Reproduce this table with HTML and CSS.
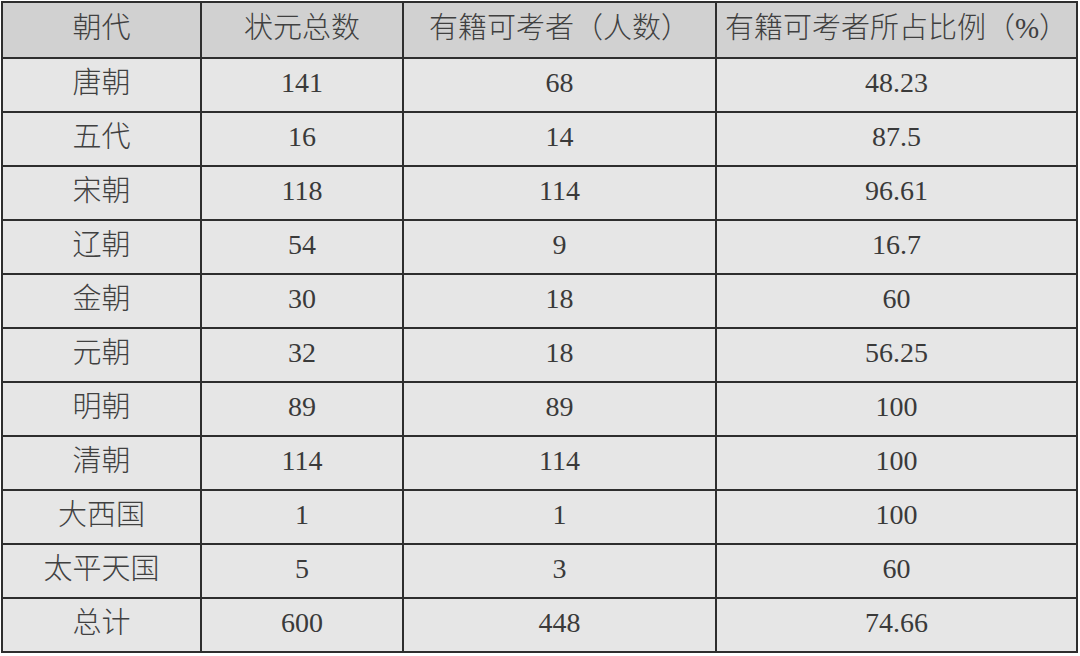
FILE: index.html
```html
<!DOCTYPE html>
<html lang="zh">
<head>
<meta charset="utf-8">
<title>历代状元籍贯统计</title>
<link rel="stylesheet" href="styles.css">
</head>
<body>
<table class="stats">
  <colgroup>
    <col class="c1"><col class="c2"><col class="c3"><col class="c4">
  </colgroup>
  <thead>
    <tr><th>朝代</th><th>状元总数</th><th>有籍可考者（人数）</th><th>有籍可考者所占比例（%）</th></tr>
  </thead>
  <tbody>
    <tr><td>唐朝</td><td>141</td><td>68</td><td>48.23</td></tr>
    <tr><td>五代</td><td>16</td><td>14</td><td>87.5</td></tr>
    <tr><td>宋朝</td><td>118</td><td>114</td><td>96.61</td></tr>
    <tr><td>辽朝</td><td>54</td><td>9</td><td>16.7</td></tr>
    <tr><td>金朝</td><td>30</td><td>18</td><td>60</td></tr>
    <tr><td>元朝</td><td>32</td><td>18</td><td>56.25</td></tr>
    <tr><td>明朝</td><td>89</td><td>89</td><td>100</td></tr>
    <tr><td>清朝</td><td>114</td><td>114</td><td>100</td></tr>
    <tr><td>大西国</td><td>1</td><td>1</td><td>100</td></tr>
    <tr><td>太平天国</td><td>5</td><td>3</td><td>60</td></tr>
    <tr><td>总计</td><td>600</td><td>448</td><td>74.66</td></tr>
  </tbody>
</table>
</body>
</html>
```

FILE: styles.css
```css
html, body {
  margin: 0;
  padding: 0;
  background: #ffffff;
}

body {
  padding: 1px 0 0 1px;
}

.stats {
  border-collapse: collapse;
  table-layout: fixed;
  width: 1077px;
  background: #e6e6e6;
  color: #3a3a3a;
  font-family: "Liberation Serif", "Noto Sans CJK SC", serif;
  font-size: 28px;
}

.c1 { width: 199px; }
.c2 { width: 202px; }
.c3 { width: 313px; }
.c4 { width: 361px; }

.stats th,
.stats td {
  border: 2px solid #2e2e2e;
  padding: 0 0 4px 0;
  text-align: center;
  vertical-align: middle;
  white-space: nowrap;
  overflow: visible;
  line-height: 1;
}

.stats th {
  background: #d1d1d1;
  font-weight: 300;
  font-size: 29px;
  height: 50px;
  color: #404040;
}

.stats td {
  height: 48px;
}

.stats td:first-child {
  font-size: 29px;
  font-weight: 300;
  color: #404040;
}
```
